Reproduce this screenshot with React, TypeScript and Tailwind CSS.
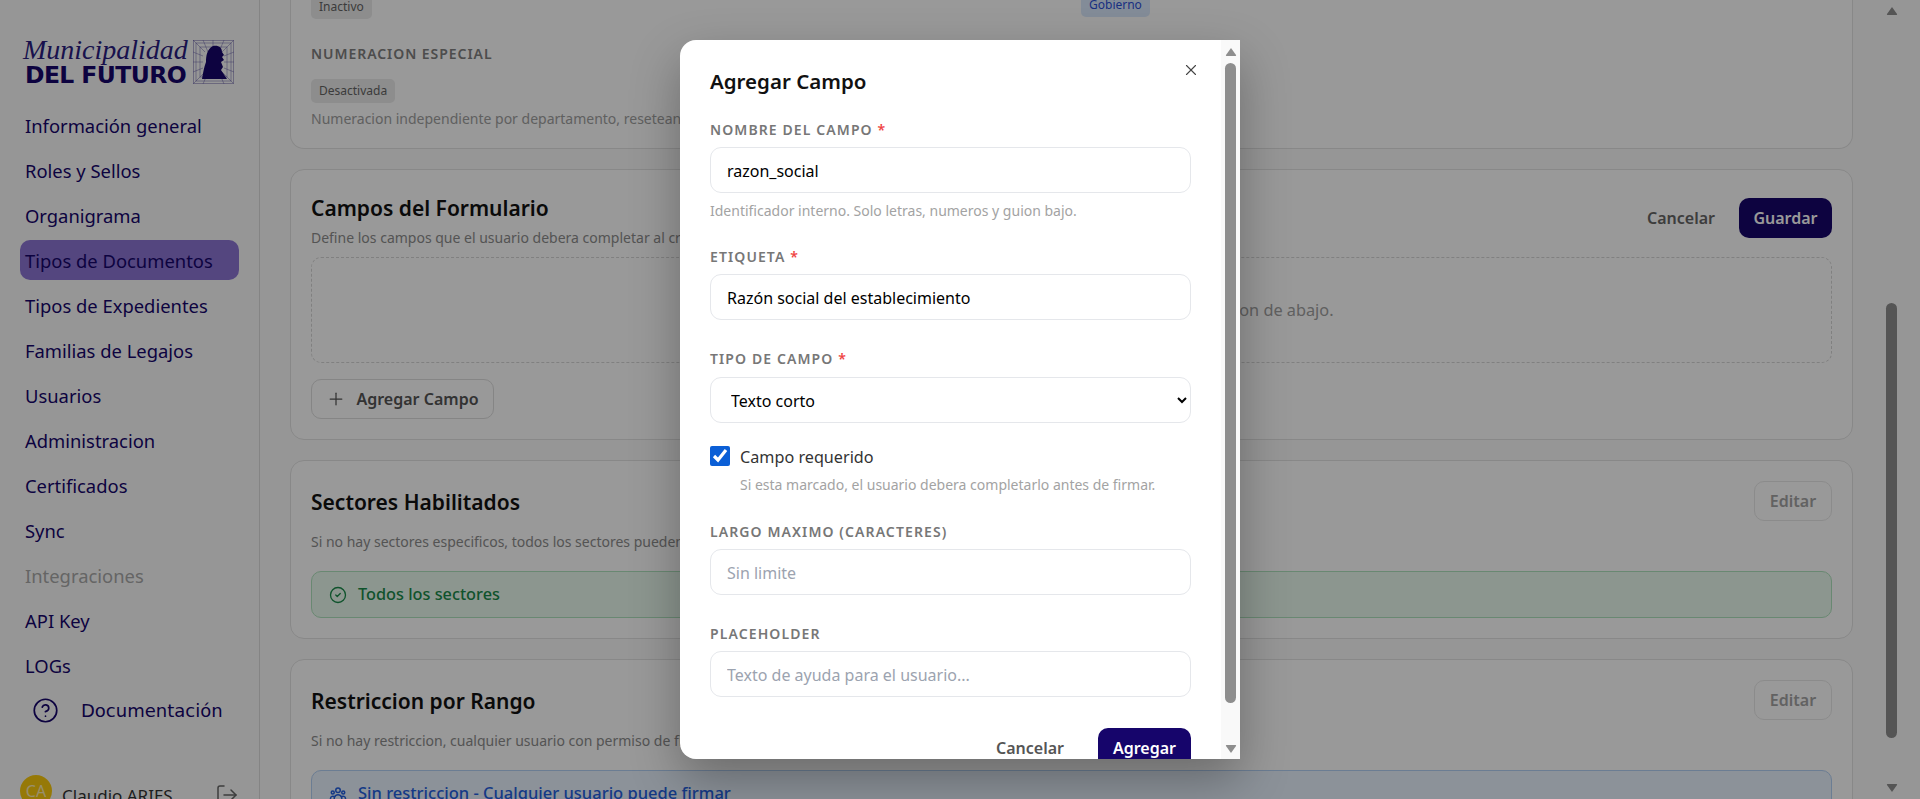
import { Plus, X, CircleCheck, CircleHelp, LogOut } from 'lucide-react';
import { HiOutlineUserGroup } from 'react-icons/hi';
import type { ReactNode } from 'react';

const navItems = [
  'Información general',
  'Roles y Sellos',
  'Organigrama',
  'Tipos de Documentos',
  'Tipos de Expedientes',
  'Familias de Legajos',
  'Usuarios',
  'Administracion',
  'Certificados',
  'Sync',
  'Integraciones',
  'API Key',
  'LOGs',
];

function Arrow({ down }: { down?: boolean }) {
  return (
    <svg width="12" height="10" viewBox="0 0 12 10" className={down ? 'rotate-180 shrink-0' : 'shrink-0'}>
      <path d="M6 1 L11 8 Q11.5 9 10.5 9 L1.5 9 Q.5 9 1 8 Z" fill="#8e8e8e" />
    </svg>
  );
}

function Logo() {
  return (
    <div className="flex items-end h-[52px] ml-[23px] text-[#16056b]">
      <div className="w-[170px] shrink-0">
        <div className="h-[33px] font-['Liberation_Serif',serif] italic text-[28px] leading-[33px] whitespace-nowrap text-[#2a1d80]">
          Municipalidad
        </div>
        <div className="h-[18px] font-['DejaVu_Sans',sans-serif] font-bold text-[23.5px] leading-[18px] tracking-[-0.6px] whitespace-nowrap ml-[2px]">
          DEL FUTURO
        </div>
      </div>
      <svg width="41" height="44" viewBox="0 0 41 44" className="shrink-0">
        <g stroke="#6a62a8" strokeWidth="0.5" fill="none">
          <rect x="0.5" y="0.5" width="40" height="43" />
          <rect x="3" y="3" width="35" height="38" />
          <rect x="7" y="7" width="27" height="30" />
          <path d="M0 0 L12 12 M41 0 L29 12 M0 44 L12 32 M41 44 L29 32 M10 0 L15 12 M20 0 V12 M31 0 L26 12 M0 12 L10 16 M0 22 H10 M0 32 L10 28 M41 12 L31 16 M41 22 H31 M41 32 L31 28 M10 44 L15 32 M31 44 L26 32" />
        </g>
        <path d="M9 39 C10 33 11 27 13 22 C13 16 14 9 20 6 C25 5 29 7 29 12 L31 15 L29 17 L31 20 L28 22 L30 27 L28 30 L34 39 Z" fill="#16056b" />
      </svg>
    </div>
  );
}

function Sidebar() {
  return (
    <aside className="w-[260px] shrink-0 h-full flex flex-col border-r border-[#dcdcdc] bg-[#fbfbfb] pt-[33px] overflow-hidden">
      <Logo />
      <nav className="flex flex-col gap-[5px] px-5 mt-[21px]">
        {navItems.map((item) => (
          <div
            key={item}
            className={
              'h-10 flex items-center px-[5px] pt-[1px] rounded-[10px] text-[18.4px] whitespace-nowrap ' +
              (item === 'Tipos de Documentos'
                ? 'bg-[#8c75d4] text-[#16056b]'
                : item === 'Integraciones'
                  ? 'text-[#a8a8a8]'
                  : 'text-[#16056b]')
            }
          >
            {item}
          </div>
        ))}
      </nav>
      <div className="flex items-center mt-[12px] ml-[32px] h-10 text-[#16056b]">
        <CircleHelp className="w-[27px] h-[27px] shrink-0" strokeWidth={1.5} />
        <span className="ml-[22px] font-['DejaVu_Sans',sans-serif] text-[18px] whitespace-nowrap">Documentación</span>
      </div>
      <div className="flex items-center px-5 mt-[49px]">
        <div className="w-8 h-8 rounded-full bg-[#fbca0c] text-white/70 flex items-center justify-center text-[16px] shrink-0">
          CA
        </div>
        <span className="ml-[10px] pt-[10px] text-[17px] text-[#333] whitespace-nowrap">Claudio ARIES</span>
        <LogOut className="ml-auto mt-[8px] w-6 h-6 text-[#666]" strokeWidth={1.5} />
      </div>
    </aside>
  );
}

function EditButton() {
  return (
    <button className="w-[78px] h-10 rounded-[10px] border border-[#e8e8e8] text-[16px] font-semibold text-[#a4a4a4] shrink-0">
      Editar
    </button>
  );
}

function Card({ title, desc, action, children }: { title: string; desc: string; action?: ReactNode; children: ReactNode }) {
  return (
    <section className="bg-white border border-[#e3e3e3] rounded-[14px] px-5 pt-5 pb-5">
      <div className="flex justify-between items-start">
        <h2 className="text-[21px] leading-[28px] font-semibold text-[#111] mt-[7px] whitespace-nowrap">{title}</h2>
        {action}
      </div>
      <p className="text-[14px] leading-5 mt-[11px] text-[#8c8c8c] whitespace-nowrap">{desc}</p>
      {children}
    </section>
  );
}

function MainPage() {
  return (
    <main className="flex-1 min-w-0 h-full flex overflow-hidden">
      <div className="flex-1 min-w-0 pl-[30px] pr-[29px]">
        {/* primer card, cortado por el scroll */}
        <section className="flow-root bg-white border border-t-0 border-[#e3e3e3] rounded-b-[14px] px-5 h-[149px]">
          <div className="flex -mt-[7px]">
            <span className="w-[770px]">
              <span className="inline-flex items-center h-6 px-2 rounded-[5px] bg-[#ebebeb] text-[12px] text-[#646464]">Inactivo</span>
            </span>
            <span className="inline-flex items-center h-6 px-2 rounded-[5px] bg-[#dbeafe] text-[12px] text-[#2b50d8]">Gobierno</span>
          </div>
          <div className="mt-[25px] text-[14px] leading-5 font-semibold tracking-[0.95px] text-[#808080]">NUMERACION ESPECIAL</div>
          <span className="inline-flex items-center h-6 px-2 mt-[15px] rounded-[5px] bg-[#ebebeb] text-[12px] text-[#646464]">Desactivada</span>
          <p className="text-[14px] leading-5 mt-[6px] text-[#a0a0a0] whitespace-nowrap">
            Numeracion independiente por departamento, reseteando cada año.
          </p>
        </section>

        <div className="flex flex-col gap-5 mt-5">
          <section className="bg-white border border-[#e3e3e3] rounded-[14px] px-5 pt-[28px] h-[271px]">
            <div className="flex justify-between items-start h-10">
              <h2 className="text-[21px] leading-[28px] font-semibold text-[#111] whitespace-nowrap -mt-[4px]">Campos del Formulario</h2>
              <div className="flex items-center gap-[24px]">
                <span className="text-[16px] font-semibold text-[#666]">Cancelar</span>
                <button className="w-[93px] h-10 rounded-[10px] bg-[#16056b] text-white text-[16px] font-semibold">Guardar</button>
              </div>
            </div>
            <p className="text-[14px] leading-5 -mt-[10px] text-[#8c8c8c] whitespace-nowrap">
              Define los campos que el usuario debera completar al crear el documento.
            </p>
            <div className="mt-[9px] h-[106px] border border-dashed border-[#d6d6d6] rounded-[10px] flex items-center justify-center text-[16.3px] text-[#a0a0a0]">
              No hay campos definidos. Agrega campos usando el boton de abajo.
            </div>
            <button className="mt-4 w-[183px] h-10 rounded-[10px] border border-[#dedede] flex items-center justify-center gap-[10px] text-[16px] font-semibold text-[#555]">
              <Plus className="w-5 h-5" strokeWidth={1.5} />
              Agregar Campo
            </button>
          </section>

          <Card title="Sectores Habilitados" desc="Si no hay sectores especificos, todos los sectores pueden firmar este tipo de documento." action={<EditButton />}>
            <div className="mt-[19px] h-[47px] rounded-[10px] border border-[#b0e3be] bg-[#e9fbee] flex items-center pl-[17px] gap-[11px] text-[16.3px] font-medium text-[#1a8a4a]">
              <CircleCheck className="w-[18px] h-[18px]" strokeWidth={1.75} />
              Todos los sectores
            </div>
          </Card>

          <Card title="Restriccion por Rango" desc="Si no hay restriccion, cualquier usuario con permiso de firma puede firmar este documento." action={<EditButton />}>
            <div className="mt-[19px] h-[47px] rounded-[10px] border border-[#b3d0f5] bg-[#e9f3ff] flex items-center pl-[17px] gap-[11px] text-[16.5px] font-medium text-[#2460e0]">
              <HiOutlineUserGroup className="w-[18px] h-[18px]" />
              Sin restriccion - Cualquier usuario puede firmar
            </div>
          </Card>
        </div>
      </div>
      {/* barra de scroll de la pagina */}
      <div className="w-[19px] mr-[19px] shrink-0 flex flex-col items-center pt-[6px]">
        <Arrow />
        <div className="w-[11px] h-[435px] mt-[287px] rounded-full bg-[#8e8e8e]" />
        <div className="mt-[45px]">
          <Arrow down />
        </div>
      </div>
    </main>
  );
}

function FieldLabel({ text, required, className }: { text: string; required?: boolean; className: string }) {
  return (
    <div className={'text-[14px] leading-5 font-semibold tracking-[1.1px] text-[#777] uppercase ' + className}>
      {text}
      {required && <span className="text-[#ef4444]"> *</span>}
    </div>
  );
}

const inputClass =
  'block w-full h-[46px] px-4 pt-[2px] rounded-[11px] border border-[#e5e7eb] bg-white text-[16px] text-black placeholder:text-[#9ca3af] outline-none';

function FieldModal() {
  return (
    <div className="absolute inset-0 bg-black/40 flex items-center justify-center">
      <div className="w-[560px] h-[719px] flex shadow-[0_20px_50px_rgba(0,0,0,0.3)] rounded-l-2xl">
        <div className="flex-1 min-w-0 bg-white rounded-l-2xl px-[30px] pt-[26px] overflow-hidden">
          <div className="flex justify-between items-start h-8">
            <h3 className="text-[20.5px] leading-8 font-semibold text-[#111] -mt-[1px]">Agregar Campo</h3>
            <X className="w-[18px] h-[18px] mt-[-5px] mr-[-9px] text-[#444]" strokeWidth={1.5} />
          </div>

          <FieldLabel text="Nombre del campo" required className="mt-[22px]" />
          <input className={inputClass + ' mt-[7px]'} defaultValue="razon_social" readOnly />
          <p className="mt-[9px] text-[14px] leading-[18px] text-[#a3a3a3]">Identificador interno. Solo letras, numeros y guion bajo.</p>

          <FieldLabel text="Etiqueta" required className="mt-[27px]" />
          <input className={inputClass + ' mt-[7px]'} defaultValue="Razón social del establecimiento" readOnly />

          <FieldLabel text="Tipo de campo" required className="mt-[29px]" />
          <select className={inputClass + ' mt-[8px]'} defaultValue="texto">
            <option value="texto">Texto corto</option>
          </select>

          <div className="flex items-start gap-[10px] mt-[23px]">
            <input type="checkbox" defaultChecked className="w-5 h-5 m-0 shrink-0 accent-[#0b5fd6]" />
            <div>
              <div className="text-[16.2px] leading-[23px] text-[#333]">Campo requerido</div>
              <p className="mt-[7px] text-[14px] leading-[18px] text-[#a3a3a3]">Si esta marcado, el usuario debera completarlo antes de firmar.</p>
            </div>
          </div>

          <FieldLabel text="Largo maximo (caracteres)" className="mt-[28px]" />
          <input className={inputClass + ' mt-[7px]'} placeholder="Sin limite" readOnly />

          <FieldLabel text="Placeholder" className="mt-[29px]" />
          <input className={inputClass + ' mt-[7px]'} placeholder="Texto de ayuda para el usuario..." readOnly />

          <div className="flex justify-end items-center gap-[34px] mt-[31px]">
            <span className="text-[16px] font-semibold text-[#555]">Cancelar</span>
            <button className="w-[93px] h-10 rounded-[10px] bg-[#16056b] text-white text-[16px] font-semibold">Agregar</button>
          </div>
        </div>
        <div className="w-[19px] shrink-0 bg-[#f9f9f9] flex flex-col items-center pt-[7px]">
          <Arrow />
          <div className="w-[11px] h-[640px] mt-[6px] rounded-full bg-[#8e8e8e]" />
          <div className="mt-[41px]">
            <Arrow down />
          </div>
        </div>
      </div>
    </div>
  );
}

export default function App() {
  return (
    <div className="relative w-full h-[799px] flex overflow-hidden bg-[#fbfbfb] font-['Noto_Sans',sans-serif]">
      <Sidebar />
      <MainPage />
      <FieldModal />
    </div>
  );
}
